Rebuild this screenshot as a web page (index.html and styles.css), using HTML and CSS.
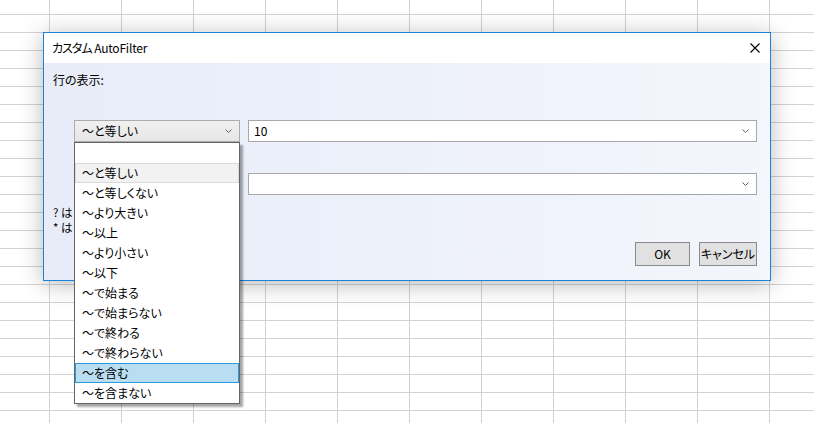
FILE: index.html
```html
<!DOCTYPE html>
<html lang="ja">
<head>
<meta charset="utf-8">
<title>カスタム AutoFilter</title>
<link rel="stylesheet" href="styles.css">
</head>
<body>
<div class="sheet">
  <div class="dialog">
    <div class="titlebar">
      <span class="title"><span class="kana">カスタム</span> AutoFilter</span>
      <svg class="close" width="10" height="10" viewBox="0 0 10 10"><path d="M0.5 0.5 L9.5 9.5 M9.5 0.5 L0.5 9.5" stroke="#000" stroke-width="1.1" fill="none"/></svg>
    </div>
    <div class="content">
      <div class="label">行の表示:</div>
      <div class="row row1">
        <div class="combo"><span>～と等しい</span><svg class="chev" width="7" height="4" viewBox="0 0 7 4"><polyline points="0.5,0.5 3.5,3.5 6.5,0.5" stroke="#606060" fill="none"/></svg></div>
        <div class="textbox"><span>10</span><svg class="chev" width="7" height="4" viewBox="0 0 7 4"><polyline points="0.5,0.5 3.5,3.5 6.5,0.5" stroke="#606060" fill="none"/></svg></div>
      </div>
      <div class="row row2">
        <div class="combo"><span></span><svg class="chev" width="7" height="4" viewBox="0 0 7 4"><polyline points="0.5,0.5 3.5,3.5 6.5,0.5" stroke="#606060" fill="none"/></svg></div>
        <div class="textbox"><span></span><svg class="chev" width="7" height="4" viewBox="0 0 7 4"><polyline points="0.5,0.5 3.5,3.5 6.5,0.5" stroke="#606060" fill="none"/></svg></div>
      </div>
      <div class="hints">
        <div class="hint">? は</div>
        <div class="hint">* は</div>
      </div>
      <div class="buttons">
        <button class="btn btn-ok">OK</button>
        <button class="btn btn-cancel">キャンセル</button>
      </div>
    </div>
  </div>
  <ul class="dropdown">
    <li class="empty"></li>
    <li class="current">～と等しい</li>
    <li>～と等しくない</li>
    <li>～より大きい</li>
    <li>～以上</li>
    <li>～より小さい</li>
    <li>～以下</li>
    <li>～で始まる</li>
    <li>～で始まらない</li>
    <li>～で終わる</li>
    <li>～で終わらない</li>
    <li class="hover">～を含む</li>
    <li>～を含まない</li>
  </ul>
</div>
</body>
</html>
```

FILE: styles.css
```css
* { box-sizing: border-box; }
html, body {
  margin: 0;
  padding: 0;
  width: 814px;
  height: 423px;
  overflow: hidden;
}
body {
  font-family: "Noto Sans CJK JP", "Noto Sans", sans-serif;
  font-size: 12px;
  font-feature-settings: "palt";
  color: #000;
}
.sheet {
  position: relative;
  width: 814px;
  height: 423px;
  background-color: #fff;
  background-image:
    linear-gradient(to right, #d2d2d2 1px, transparent 1px),
    linear-gradient(to bottom, #d2d2d2 1px, transparent 1px);
  background-size: 72px 18px;
  background-position: 49px 14px;
}
.dialog {
  position: absolute;
  left: 43px;
  top: 32px;
  width: 728px;
  height: 249px;
  border: 1px solid #1a82d8;
  background: #fff;
  box-shadow: 0 3px 22px rgba(0, 0, 0, 0.28);
  display: flex;
  flex-direction: column;
}
.titlebar {
  height: 30px;
  flex: none;
  display: flex;
  align-items: center;
  justify-content: space-between;
  padding: 0 10px 0 8px;
  background: #fff;
}
.title {
  line-height: 16px;
  font-size: 12px;
  letter-spacing: -0.2px;
}
.title .kana { letter-spacing: -1px; }
.close { display: block; }
.content {
  flex: 1;
  background: linear-gradient(to right, #e8ecf8, #f3f6fc);
  padding: 9px 13px 0 9px;
  display: flex;
  flex-direction: column;
}
.label {
  line-height: 16px;
  height: 16px;
}
.row {
  display: flex;
  gap: 8px;
  padding-left: 21px;
  height: 22px;
}
.row1 { margin-top: 32px; }
.row2 { margin-top: 31px; }
.combo, .textbox {
  height: 22px;
  display: flex;
  align-items: center;
  justify-content: space-between;
  line-height: 16px;
  padding: 0 7px 0 7px;
  border: 1px solid #acacac;
}
.combo {
  width: 166px;
  flex: none;
  background: linear-gradient(to bottom, #f0f0f0, #e6e6e6);
}
.textbox {
  flex: 1;
  background: #fff;
  border-color: #a8a8a8;
  padding-left: 5px;
}
.chev { display: block; flex: none; }
.hints {
  margin-top: 10px;
  width: 20px;
  white-space: nowrap;
  display: flex;
  flex-direction: column;
  gap: 1px;
}
.hint {
  font-size: 11.5px;
  line-height: 14px;
  height: 14px;
}
.buttons {
  margin-top: 8px;
  display: flex;
  justify-content: flex-end;
  gap: 9px;
}
.btn {
  font: inherit;
  font-size: 12px;
  height: 24px;
  padding: 0;
  background: #e1e1e1;
  border: 1px solid #8a8a8a;
  color: #000;
  line-height: 16px;
}
.btn-ok { width: 55px; }
.btn-cancel { width: 58px; }
.dropdown {
  position: absolute;
  left: 74px;
  top: 142px;
  width: 166px;
  margin: 0;
  padding: 0;
  list-style: none;
  background: #fff;
  border: 1px solid #646464;
  box-shadow: 3px 3px 2px rgba(0, 0, 0, 0.35);
}
.dropdown li {
  height: 20px;
  line-height: 18px;
  padding-left: 6px;
  border: 1px solid transparent;
  white-space: nowrap;
}
.dropdown li.current {
  background: #f2f2f2;
  border-color: #dadada;
}
.dropdown li.hover {
  background: #b9def2;
  border-color: #2a9ad8;
}
```
